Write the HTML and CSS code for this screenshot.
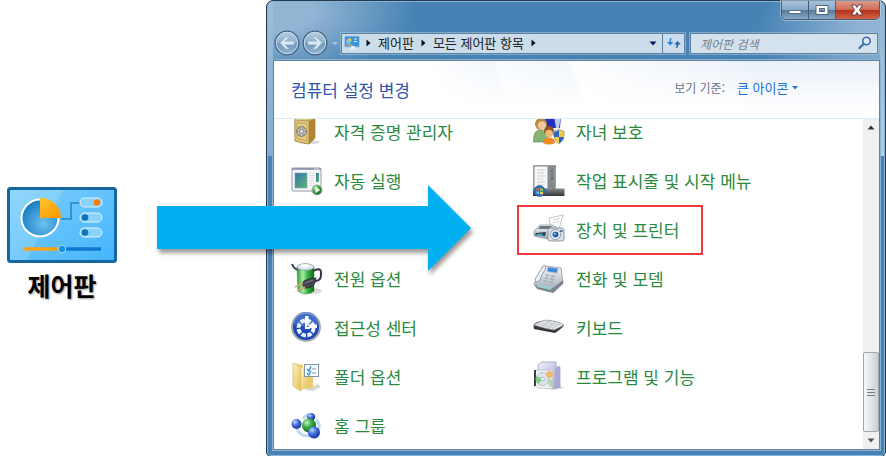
FILE: index.html
```
<!DOCTYPE html>
<html lang="ko">
  <head>
    <meta charset="utf-8">
    <meta name="viewport" content="width=device-width, initial-scale=1">
    <title>제어판</title>
    <link rel="stylesheet" href="styles.css">
  </head>
  <body>
    <!-- Shared gradients -->
    <svg class="defs" width="0" height="0" aria-hidden="true">
      <defs>
        <linearGradient id="sky" x1="0" y1="0" x2="1" y2="1"><stop offset="0" stop-color="#7fd0fb"/><stop offset="1" stop-color="#45b4fb"/></linearGradient>
        <linearGradient id="orange" x1="0" y1="0" x2="1" y2="1"><stop offset="0" stop-color="#ffc52e"/><stop offset="1" stop-color="#fb9500"/></linearGradient>
        <linearGradient id="gold" x1="0" y1="0" x2="1" y2="1"><stop offset="0" stop-color="#f3dfa0"/><stop offset="1" stop-color="#b78f38"/></linearGradient>
        <linearGradient id="paper" x1="0" y1="0" x2="1" y2="1"><stop offset="0" stop-color="#fdf3bd"/><stop offset="1" stop-color="#e3bf55"/></linearGradient>
        <linearGradient id="steel" x1="0" y1="0" x2="0" y2="1"><stop offset="0" stop-color="#f6f8fa"/><stop offset="1" stop-color="#9aa4ae"/></linearGradient>
        <linearGradient id="dark" x1="0" y1="0" x2="0" y2="1"><stop offset="0" stop-color="#85898d"/><stop offset="1" stop-color="#34383c"/></linearGradient>
        <linearGradient id="tube" x1="0" y1="0" x2="1" y2="0"><stop offset="0" stop-color="#2c9a35"/><stop offset="0.35" stop-color="#a5eda0"/><stop offset="0.65" stop-color="#2fae3a"/><stop offset="1" stop-color="#0f6a1c"/></linearGradient>
        <linearGradient id="sea" x1="0" y1="0" x2="1" y2="1"><stop offset="0" stop-color="#2b77a8"/><stop offset="1" stop-color="#64b477"/></linearGradient>
        <linearGradient id="lilac" x1="0" y1="0" x2="1" y2="1"><stop offset="0" stop-color="#f1f0fd"/><stop offset="1" stop-color="#a3a1d6"/></linearGradient>
        <radialGradient id="pie" cx="0.6" cy="0.65" r="0.7"><stop offset="0" stop-color="#6cc0ee"/><stop offset="1" stop-color="#1177c0"/></radialGradient>
        <radialGradient id="blueball" cx="0.35" cy="0.3" r="0.75"><stop offset="0" stop-color="#c2d8ff"/><stop offset="0.45" stop-color="#426fdc"/><stop offset="1" stop-color="#15309a"/></radialGradient>
        <radialGradient id="greenball" cx="0.35" cy="0.3" r="0.75"><stop offset="0" stop-color="#c5f5bc"/><stop offset="0.45" stop-color="#38ad3f"/><stop offset="1" stop-color="#0b6518"/></radialGradient>
        <linearGradient id="disc" x1="0" y1="0" x2="0" y2="1"><stop offset="0" stop-color="#b5cee2"/><stop offset="0.48" stop-color="#8fb0cb"/><stop offset="0.52" stop-color="#6f98bb"/><stop offset="1" stop-color="#92b7d5"/></linearGradient>
      </defs>
    </svg>

    <main class="page">
      <!-- Shortcut -->
      <figure class="shortcut">
        <svg width="110" height="76" viewBox="0 0 110 76" aria-hidden="true">
          <rect x="1.500" y="1.500" width="107" height="73" rx="2" fill="url(#sky)" stroke="#14679f" stroke-width="3"/>
          <path d="M3 3H56L20 73H3z" fill="#fff" opacity="0.15"/>
          <path d="M54 32H64V16H74" fill="none" stroke="#2384c4" stroke-width="1.500"/>
          <circle cx="33" cy="31" r="18.500" fill="url(#pie)" stroke="#fff" stroke-width="2"/>
          <path d="M33 31V11A20 20 0 0 1 54 31z" fill="url(#orange)"/>
          <g fill="#8bd3fb" stroke="#dff3ff" stroke-width="1">
            <rect x="73" y="11" width="22" height="9" rx="4.500"/>
            <rect x="73" y="26" width="22" height="9" rx="4.500"/>
            <rect x="73" y="41" width="22" height="9" rx="4.500"/>
          </g>
          <circle cx="90" cy="15.500" r="3.300" fill="#f87d0b"/>
          <circle cx="78" cy="30.500" r="3.300" fill="#0d75bd"/>
          <circle cx="78" cy="45.500" r="3.300" fill="#0d75bd"/>
          <path d="M16 62H55" stroke="#fba311" stroke-width="3.500"/>
          <path d="M55 62H94" stroke="#0e77cf" stroke-width="3.500"/>
          <circle cx="55" cy="62" r="3.800" fill="#1492ee" stroke="#a9defd" stroke-width="1"/>
        </svg>
        <figcaption>제어판</figcaption>
      </figure>

      <!-- Explorer window -->
      <section class="window">
        <div class="window-buttons">
          <button class="window-button" aria-label="최소화"><svg width="14" height="12" viewBox="0 0 14 12"><rect x="1" y="6.500" width="12" height="3" rx="0.500" fill="#fff" stroke="#47596c" stroke-width="0.800"/></svg></button>
          <button class="window-button" aria-label="최대화"><svg width="14" height="12" viewBox="0 0 14 12"><path d="M1 1.500H13V10.500H1zM4.500 4.500V7.500H9.500V4.500z" fill="#fff" fill-rule="evenodd" stroke="#47596c" stroke-width="0.900"/></svg></button>
          <button class="window-button close" aria-label="닫기"><svg width="14" height="12" viewBox="0 0 14 12"><path d="M1.500 1H5.500L7 3.500L8.500 1H12.500L9.500 6L12.500 11H8.500L7 8.500L5.500 11H1.500L4.500 6z" fill="#fff" stroke="#5d3a3c" stroke-width="0.900"/></svg></button>
        </div>

        <nav class="toolbar">
          <button class="travel" aria-label="뒤로"><svg width="26" height="26" viewBox="0 0 26 26"><circle cx="13" cy="13" r="11.800" fill="url(#disc)" stroke="#42607d" stroke-width="1.300"/><circle cx="13" cy="13" r="10.700" fill="none" stroke="#c7dbea" stroke-width="1"/><path d="M6 13L12 7H15L11 11.300H20V14.700H11L15 19H12z" fill="#dce9f3" stroke="#9bb8cf" stroke-width="0.600"/></svg></button>
          <button class="travel" aria-label="앞으로"><svg width="26" height="26" viewBox="0 0 26 26"><circle cx="13" cy="13" r="11.800" fill="url(#disc)" stroke="#42607d" stroke-width="1.300"/><circle cx="13" cy="13" r="10.700" fill="none" stroke="#c7dbea" stroke-width="1"/><path d="M20 13L14 7H11L15 11.300H6V14.700H15L11 19H14z" fill="#dce9f3" stroke="#9bb8cf" stroke-width="0.600"/></svg></button>
          <button class="recent" aria-label="최근 페이지"><svg width="8" height="5" viewBox="0 0 8 5"><path d="M1 1H7L4 4z" fill="#a8cae6"/></svg></button>

          <div class="address">
            <svg class="address-icon" width="16" height="16" viewBox="0 0 16 16"><rect x="0.500" y="1" width="15" height="11" rx="1" fill="#3c94da" stroke="#a6c9e5"/><circle cx="4.500" cy="6.500" r="2.500" fill="#6fc4f5"/><path d="M4.500 6V3A3 3 0 0 1 7.500 6z" fill="#f9c440"/><path d="M10 4H13M10 6.500H13" stroke="#e3f4ff"/><path d="M2 10H8" stroke="#f5b83d"/><path d="M6 13L8 10.500L11 11.500V14.500H6z" fill="#e8eef3"/></svg>
            <svg class="crumb-arrow" width="5" height="8" viewBox="0 0 5 8"><path d="M0.500 0.500L4.500 4L0.500 7.500z" fill="#111"/></svg>
            <a class="crumb" href="#">제어판</a>
            <svg class="crumb-arrow" width="5" height="8" viewBox="0 0 5 8"><path d="M0.500 0.500L4.500 4L0.500 7.500z" fill="#111"/></svg>
            <a class="crumb" href="#">모든 제어판 항목</a>
            <svg class="crumb-arrow" width="5" height="8" viewBox="0 0 5 8"><path d="M0.500 0.500L4.500 4L0.500 7.500z" fill="#111"/></svg>
            <button class="history" aria-label="이전 위치"><svg width="8" height="5" viewBox="0 0 8 5"><path d="M0.500 0.500H7.500L4 4.500z" fill="#14145c"/></svg></button>
            <button class="refresh" aria-label="새로 고침"><svg width="14" height="12" viewBox="0 0 14 12"><path d="M5.500 1Q4 1 4 3V5H6.500L3.200 8.500L0 5H2.400V3Q2.400 0.500 5.500 1z" fill="#2b82d2"/><path d="M8 11Q9.500 11 9.500 9V7.500H7.200L10.500 4L13.800 7.500H11.200V9Q11.200 11.500 8 11z" fill="#2564b4"/></svg></button>
          </div>

          <div class="search">
            <input type="search" placeholder="제어판 검색" aria-label="제어판 검색">
            <svg width="14" height="14" viewBox="0 0 14 14"><circle cx="8.500" cy="5" r="3.700" fill="#dcebf8" stroke="#3a6eae" stroke-width="1.600"/><path d="M5.500 8L1.500 12" stroke="#3a6eae" stroke-width="2.200" stroke-linecap="round"/></svg>
          </div>
        </nav>

        <div class="panel">
          <header class="panel-header">
            <h1>컴퓨터 설정 변경</h1>
            <div class="view">
              <label for="view-by">보기 기준:</label>
              <select id="view-by">
                <option>큰 아이콘</option>
              </select>
              <svg width="6" height="4" viewBox="0 0 6 4"><path d="M0 0H6L3 3.500z" fill="#2176d2"/></svg>
            </div>
          </header>

          <div class="panel-body">
            <ul class="items">
              <li><a class="item" href="#">
                <svg width="32" height="32" viewBox="0 0 32 32"><path d="M22 24L30 26L24 28H8z" fill="#000" opacity="0.15"/><path d="M4 3L9 0H24V22L18 28L4 25z" fill="url(#gold)" stroke="#9b7a2d" stroke-width="0.700"/><path d="M18 5L24 2V22L18 28z" fill="#b08631"/><path d="M4 4L18 5V28L4 25z" fill="#e2cb82" stroke="#9a7b33" stroke-width="0.600"/><path d="M6 6.500L16 7.500V25L6 22.500z" fill="none" stroke="#c3a458"/><circle cx="10.500" cy="15.500" r="4.800" fill="#a9a9a5" stroke="#75736a"/><path d="M10.500 11V20M6.500 13.500L14.500 17.500M6.500 17.500L14.500 13.500" stroke="#e9e8df" stroke-width="0.800"/><circle cx="10.500" cy="15.500" r="2" fill="#dcdcd8" stroke="#77756c" stroke-width="0.700"/></svg>
                자격 증명 관리자</a></li>
              <li><a class="item" href="#">
                <svg width="32" height="32" viewBox="0 0 32 32"><path d="M11 0H28L27 12H13z" fill="#202fc4"/><path d="M21 0H28L26 12H23z" fill="#b7cdf2"/><circle cx="8" cy="8" r="6" fill="#b9893c"/><circle cx="9" cy="9.500" r="4.200" fill="#f1c999"/><path d="M0.500 26Q0 14 7 14Q15 14 15 26z" fill="#85b374" stroke="#4f8544" stroke-width="0.500"/><circle cx="16" cy="15" r="5" fill="#92551f"/><circle cx="16" cy="17.500" r="3.800" fill="#edb77d"/><path d="M10 27Q10 21.500 16 21.500Q22 21.500 22 27Q16 30 10 27z" fill="#ed8b24"/><path d="M26 13Q28 15 31 15Q32 24 26 28Q20 24 20.500 15Q24 15 26 13z" fill="#f2cc3b" stroke="#a1a9b3"/><path d="M26 14V21H21Q20.500 18 21 15.500Q24 16 26 14zM26 21H31Q30 25 26 27z" fill="#2b66be"/></svg>
                자녀 보호</a></li>
              <li><a class="item" href="#">
                <svg width="32" height="32" viewBox="0 0 32 32"><rect x="1" y="3" width="29" height="23" rx="1" fill="#f5f7fa" stroke="#929baa"/><path d="M1 4H30" stroke="#7c88a0" stroke-width="1.500"/><path d="M23 4H28" stroke="#eef" stroke-width="0.800"/><rect x="4" y="8" width="12" height="15" fill="url(#sea)" stroke="#829eaf" stroke-width="0.600"/><path d="M18 8H23M18 10.500H23M18 13H23M18 15.500H23M18 18H23M18 20.500H22" stroke="#d7dbe0"/><rect x="25" y="8" width="3" height="9" fill="url(#sea)"/><circle cx="26" cy="25" r="5" fill="url(#greenball)" stroke="#a6aaa6"/><path d="M24.500 22L29 25L24.500 28z" fill="#fff"/></svg>
                자동 실행</a></li>
              <li><a class="item" href="#">
                <svg width="32" height="32" viewBox="0 0 32 32"><rect x="0.500" y="0.500" width="22" height="24" fill="#85898d" stroke="#9da0a3"/><rect x="1.500" y="1.500" width="13" height="22" fill="#f6f8f9"/><path d="M4 5H12M4 8H11M4 11H12M4 14H10M4 17H12M4 20H10" stroke="#c9cfd3"/><path d="M17 3H21V16H17zM17 5H21M17 8H21M17 11H21" fill="#6c7074" stroke="#a2a5a7" stroke-width="0.700"/><path d="M0 23.500H31.500V31H0z" fill="url(#dark)"/><circle cx="6.500" cy="26" r="5.500" fill="#2a6fc0" stroke="#1b4d92" stroke-width="0.500"/><path d="M3.500 23.500L6 23V25.500H3.500z" fill="#f15c28"/><path d="M7 23L10 24V26.500L7 25.500z" fill="#86cb3d"/><path d="M3.500 26.500H6V29L3.500 28.500z" fill="#66c6f2"/><path d="M7 26.500L10 27.500V29.500L7 29z" fill="#fbd43f"/></svg>
                작업 표시줄 및 시작 메뉴</a></li>
              <li></li>
              <li><a class="item marked" href="#">
                <svg width="32" height="32" viewBox="0 0 32 32"><path d="M16 4L30 1L26 15L18 15z" fill="#fbfcfd" stroke="#a9b0b7" stroke-width="0.700"/><path d="M20 6L27 4.500M20 9L26 7.500" stroke="#d4d9de"/><path d="M1 17L7 11H20L23 15V22L15 25L1 22z" fill="url(#steel)" stroke="#808991" stroke-width="0.700"/><path d="M7 12H19L20 15H5z" fill="#6f7880"/><path d="M3 19L13 18L12 22L2 21z" fill="#2c3d4d"/><path d="M4 20L10 19.500L9 22L3 22z" fill="#46a9c0"/><rect x="15" y="14" width="16" height="13" rx="2" fill="#d9e0e7" stroke="#7b8794" stroke-width="0.800"/><rect x="18" y="12.500" width="6" height="3" fill="#aeb8c2"/><circle cx="22.500" cy="20.500" r="5" fill="#f3f6f8" stroke="#8b97a3"/><circle cx="22.500" cy="20.500" r="3" fill="#255da5"/><circle cx="21.800" cy="19.700" r="1" fill="#b2d7f8"/><rect x="27" y="16" width="2.500" height="2" fill="#57728e"/></svg>
                장치 및 프린터</a></li>
              <li><a class="item" href="#">
                <svg width="32" height="32" viewBox="0 0 32 32"><ellipse cx="22" cy="28" rx="9" ry="3" fill="#000" opacity="0.15"/><path d="M1 1Q3 7 10 8" fill="none" stroke="#3c3c50" stroke-width="2"/><path d="M6 4Q14 -2 23 4V28Q15 34 7 28z" fill="url(#tube)" stroke="#26752c" stroke-width="0.500"/><ellipse cx="14.500" cy="4" rx="8.500" ry="3.300" fill="#dce5ee" stroke="#7e9297" stroke-width="0.700"/><ellipse cx="14" cy="2.800" rx="4.500" ry="1.800" fill="#fafdff"/><path d="M22 8Q31 3 30 12Q30 18 24 18" fill="none" stroke="#343446" stroke-width="2"/><path d="M11 20Q15 15 25 15Q25 23 17 25L13 25z" fill="#42434e" stroke="#23242f" stroke-width="0.700"/><path d="M12 20L4 24M14 24L6 28" stroke="#cfa878" stroke-width="1.800"/><path d="M14 20L22 17" stroke="#85868e"/></svg>
                전원 옵션</a></li>
              <li><a class="item" href="#">
                <svg width="32" height="32" viewBox="0 0 32 32"><path d="M1 21L8 8L13 3L28 5L30 20L21 29L3 24z" fill="url(#steel)" stroke="#8c949c" stroke-width="0.800"/><path d="M2 22L20 25L30 17V21L20 30L4 26z" fill="#7c858d"/><path d="M4 21L19 24L18 27L4 24z" fill="#9ecad3"/><path d="M4 19Q0 18 4 13L10 3Q12 1 13 4L12 7Q8 12 7 17z" fill="#edf1f4" stroke="#808b96" stroke-width="0.800"/><path d="M15 4L25 5.500L24 10L14 8.500z" fill="#3d85db" stroke="#b1c2d2" stroke-width="0.600"/><path d="M13 12L16 12.500M18 13L22 13.500M12 15L15 15.500M17 16L21 16.500M11 18L14 18.500M16 19L20 19.500" stroke="#a2abb4" stroke-width="1.400"/></svg>
                전화 및 모뎀</a></li>
              <li><a class="item" href="#">
                <svg width="32" height="32" viewBox="0 0 32 32"><circle cx="15" cy="15" r="14" fill="#1d49b5" stroke="#a9abb0" stroke-width="2"/><path d="M2.500 12A12.500 12.500 0 0 1 27.500 12Q15 17 2.500 12z" fill="#5983dc" opacity="0.600"/><circle cx="15" cy="16" r="7.500" fill="none" stroke="#eaf1ff" stroke-width="4" stroke-dasharray="4.500 1.400"/><path d="M14 4H17.500V12.500H26V16H14z" fill="#fff"/><circle cx="15" cy="16" r="3" fill="#2852b8"/><path d="M15 12V16H19" fill="none" stroke="#fff" stroke-width="2"/></svg>
                접근성 센터</a></li>
              <li><a class="item" href="#">
                <svg width="32" height="32" viewBox="0 0 32 32"><path d="M0.500 14Q0 11 8 9L14 8Q25 9 31 13Q31 15 22 21Q11 19 1 17z" fill="#34383d"/><path d="M1 13Q5 10 13 8Q25 9 31 13L21 18Q10 16 1 13z" fill="#e8eaec" stroke="#9a9fa4" stroke-width="0.700"/><path d="M5 12.500L21 16M8 11L24 14.500M12 9.500L27 13M9 14.500L17 9M14 16L22 10M19 17L26 11.500" stroke="#b7bbc0" stroke-width="0.700"/></svg>
                키보드</a></li>
              <li><a class="item" href="#">
                <svg width="32" height="32" viewBox="0 0 32 32"><path d="M13 29L27 23L30 26L22 30z" fill="#000" opacity="0.150"/><path d="M4 2L12 4V25L18 28L22 26V11L13 8z" fill="#eccb6e"/><path d="M2 2L10 6V30L2 25z" fill="url(#paper)" stroke="#ceac4d" stroke-width="0.600"/><path d="M10 8L17 10V27L10 29z" fill="url(#paper)"/><rect x="13.500" y="3.500" width="14" height="12" fill="#f9fbff" stroke="#8495a8"/><path d="M16 8L18 10L20 5M16 12L18 14L20 10" fill="none" stroke="#2793d5" stroke-width="1.300"/><path d="M21 8H25M21 12H25" stroke="#8291a2"/></svg>
                폴더 옵션</a></li>
              <li><a class="item" href="#">
                <svg width="32" height="32" viewBox="0 0 32 32"><path d="M25 24L31 27L22 29z" fill="#000" opacity="0.150"/><path d="M5 4L9 1H23V6H27V26L20 28L6 25z" fill="url(#lilac)" stroke="#9291c1" stroke-width="0.700"/><path d="M22 7L27 5V25L22 28z" fill="#a9a8d6"/><path d="M2 9H20V28L5 27L2 25z" fill="#eef2f5" stroke="#a7adb9" stroke-width="0.600"/><path d="M2 9V25" stroke="#3a3e45" stroke-width="2"/><circle cx="9.500" cy="18" r="6.500" fill="#dce5e8" stroke="#a6b0b6" stroke-width="0.700"/><path d="M9.500 18L3.500 15A6.500 6.500 0 0 0 5.500 23z" fill="#80cf83"/><circle cx="9.500" cy="18" r="1.800" fill="#fff" stroke="#88939a" stroke-width="0.600"/><circle cx="16.500" cy="13.500" r="3.500" fill="#efb874"/><path d="M14 19L20 18V27L16 25z" fill="#b7d2ba"/></svg>
                프로그램 및 기능</a></li>
              <li><a class="item" href="#">
                <svg width="32" height="32" viewBox="0 0 32 32"><path d="M6 19Q10 28 20 25M12 9Q17 1 24 8M25 10Q31 15 26 22" fill="none" stroke="#bdd9f0" stroke-width="3"/><circle cx="20" cy="7" r="4" fill="url(#blueball)"/><circle cx="5.500" cy="14" r="5" fill="url(#blueball)"/><circle cx="18" cy="15.500" r="7" fill="url(#greenball)"/><circle cx="23" cy="22.500" r="6" fill="url(#blueball)"/></svg>
                홈 그룹</a></li>
            </ul>

            <div class="scrollbar">
              <button class="scroll-button" aria-label="위로"><svg width="8" height="5" viewBox="0 0 8 5"><path d="M4 0.500L7.500 4.500H0.500z" fill="#333"/></svg></button>
              <div class="scroll-thumb"><svg width="8" height="9" viewBox="0 0 8 9"><path d="M0 1.500H8M0 4.500H8M0 7.500H8" stroke="#777b80"/></svg></div>
              <button class="scroll-button" aria-label="아래로"><svg width="8" height="5" viewBox="0 0 8 5"><path d="M4 4.500L7.500 0.500H0.500z" fill="#555"/></svg></button>
            </div>
          </div>
        </div>
      </section>

      <!-- Callout arrow, lies over the window -->
      <svg class="callout" width="314" height="86" viewBox="0 0 314 86" aria-hidden="true"><path d="M0 21H271V0L314 43L271 86V64H0z" fill="#02aff1"/></svg>
    </main>
  </body>
</html>
```
FILE: styles.css
```
* {
  box-sizing: border-box;
}

body {
  margin: 0;
  background-color: #fff;
  font-family: "Noto Sans CJK KR", "Noto Sans", sans-serif;
  font-size: 13px;
  line-height: 20px;
}

button {
  display: flex;
  align-items: center;
  justify-content: center;
  padding: 0;
  border: none;
  background: none;
  cursor: pointer;
}

a {
  text-decoration: none;
}

svg {
  display: block;
  flex-shrink: 0;
}

.defs {
  position: absolute;
}

.page {
  position: relative;
  display: flex;
  align-items: flex-start;
}

.shortcut {
  width: 266px;
  margin: 0;
  padding: 187px 0 0 7px;
}

.shortcut figcaption {
  width: 110px;
  margin-top: 6px;
  font-size: 25px;
  font-weight: bold;
  line-height: 32px;
  text-align: center;
  text-shadow: 1px 1px 2px rgba(0, 0, 0, 0.4);
}

.callout {
  position: absolute;
  top: 185px;
  left: 157px;
  overflow: visible;
  filter: drop-shadow(2px 4px 2px rgba(0, 0, 0, 0.4));
}

/* Window frame */
.window {
  flex: 1;
  min-width: 0;
  padding: 0 5px 6px 6px;
  border: 1px solid #26394c;
  border-radius: 7px 7px 5px 5px;
  background:
    linear-gradient(#9dbfdb, #82acd0) left top / 6px 155px no-repeat,
    linear-gradient(#8fb3d2, #b4cee2) right top / 5px 155px no-repeat,
    radial-gradient(ellipse 150px 70px at 0 10px, #92b5d4 30%, rgba(146, 181, 212, 0)),
    radial-gradient(ellipse 130px 70px at 100% 30px, #8fb3d3 20%, rgba(143, 179, 211, 0)),
    #4682b4;
  box-shadow: inset 0 0 0 1px #86b5db;
}

.window-buttons {
  display: flex;
  width: 99px;
  height: 19px;
  margin-left: auto;
  border: 1px solid #455d76;
  border-top: none;
  border-radius: 0 0 5px 5px;
  overflow: hidden;
  box-shadow: 0 0 0 1px rgba(190, 215, 235, 0.6);
}

.window-button {
  flex: 27;
  border-right: 1px solid #455d76;
  background: linear-gradient(#a6c2da, #88a9c6 48%, #57799b 52%, #87abc9);
}

.window-button.close {
  flex: 45;
  border-right: none;
  background: linear-gradient(#dc9a8c, #cf6b58 48%, #b2301c 52%, #d4644a);
}

/* Navigation toolbar */
.toolbar {
  display: flex;
  align-items: center;
  height: 40px;
  padding: 6px 2px 0 1px;
}

.travel {
  margin-right: 2px;
}

.recent {
  width: 10px;
  margin-right: 1px;
}

.address,
.search {
  display: flex;
  align-items: center;
  height: 21px;
  border: 1px solid #5e7f9d;
  background-color: #cbdcea;
  box-shadow: 0 0 0 1px rgba(160, 196, 224, 0.6);
}

.address {
  flex: 1;
  padding-left: 2px;
  margin-right: 5px;
}

.address-icon {
  margin-right: 6px;
}

.crumb {
  margin: 0 7px;
  color: #222;
}

.history {
  width: 18px;
  height: 19px;
  margin-left: auto;
}

.refresh {
  width: 22px;
  height: 19px;
  border-left: 1px solid #5e7f9d;
}

.search {
  width: 188px;
  padding: 0 5px 0 9px;
  background-color: #d4e2ee;
}

.search input {
  flex: 1;
  min-width: 0;
  height: 19px;
  padding: 0;
  border: none;
  outline: none;
  background: none;
  color: #222;
  font: italic 12px/19px "Noto Sans CJK KR", "Noto Sans", sans-serif;
}

.search input::placeholder {
  color: #75818c;
}

/* Panel */
.panel {
  border: 1px solid #66829b;
  background-color: #fff;
  box-shadow: 0 0 0 1px #8ab2d3;
}

.panel-header {
  display: flex;
  align-items: center;
  justify-content: space-between;
  height: 58px;
  padding: 0 81px 0 17px;
  border-bottom: 1px solid #dcebf8;
  background:
    linear-gradient(rgba(255, 255, 255, 0), #fff 85%),
    linear-gradient(68deg, #fff 28%, #f1f6fc 38%, #f8fbff 39%, #f1f6fc 50%, #fdfeff 51%, #e9f0f9 80%);
}

.panel-header h1 {
  margin: 0;
  color: #2f55ad;
  font-size: 17px;
  font-weight: normal;
  line-height: 24px;
}

.view {
  display: flex;
  align-items: center;
  padding-bottom: 4px;
  color: #6d7583;
  font-size: 12px;
}

.view select {
  margin: 0 4px 0 12px;
  padding: 0;
  border: none;
  outline: none;
  background: none;
  appearance: none;
  color: #1c72d0;
  font: 13px/20px "Noto Sans CJK KR", "Noto Sans", sans-serif;
}

.panel-body {
  display: flex;
  overflow: hidden;
}

.items {
  flex: 1;
  display: grid;
  grid-template-columns: 242px 1fr;
  grid-auto-rows: 32px;
  row-gap: 17px;
  margin: -3px 0 7px;
  padding: 0 0 0 17px;
  list-style: none;
}

.item {
  position: relative;
  display: inline-flex;
  align-items: center;
  gap: 11px;
  height: 32px;
  color: #298a3c;
  font-size: 17px;
  line-height: 24px;
  white-space: nowrap;
}

.marked::after {
  content: "";
  position: absolute;
  inset: -9px -24px -9px -16px;
  border: 2px solid #f23a3c;
}

/* Scrollbar */
.scrollbar {
  display: flex;
  flex-direction: column;
  width: 16px;
  background-color: #f0f0f1;
}

.scroll-button {
  height: 17px;
}

.scroll-thumb {
  display: flex;
  align-items: center;
  justify-content: center;
  height: 80px;
  margin-top: auto;
  border: 1px solid #a2a5a9;
  border-radius: 2px;
  background: linear-gradient(90deg, #f7f7f8, #e2e4e7 50%, #cccfd3);
}
```
